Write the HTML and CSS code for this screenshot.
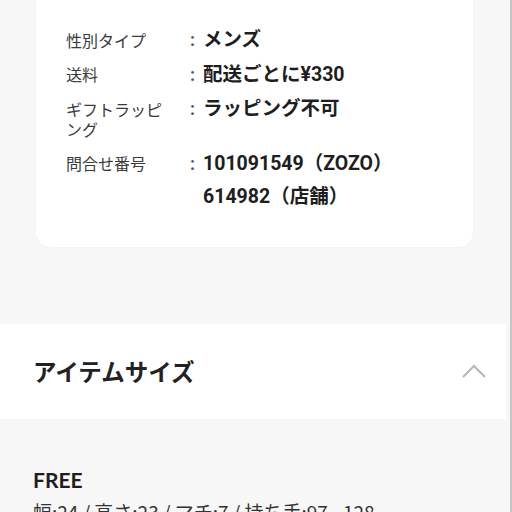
FILE: index.html
```html
<!DOCTYPE html>
<html lang="ja">
  <head>
    <meta charset="UTF-8" />
    <meta name="viewport" content="width=device-width, initial-scale=1.0" />
    <title>アイテム詳細</title>
    <link rel="stylesheet" href="styles.css">
  </head>
  <body>
    <div class="page">
      <div class="infoCard">
        <dl class="infoList">
          <dt>性別タイプ</dt>
          <dd><span class="colon">:</span><span class="value">メンズ</span></dd>

          <dt>送料</dt>
          <dd><span class="colon">:</span><span class="value">配送ごとに¥330</span></dd>

          <dt>ギフトラッピング</dt>
          <dd><span class="colon">:</span><span class="value">ラッピング不可</span></dd>

          <dt>問合せ番号</dt>
          <dd><span class="colon">:</span><span class="value">101091549（ZOZO）<br>614982（店舗）</span></dd>
        </dl>
      </div>

      <div class="sectionHead">
        <h2>アイテムサイズ</h2>
        <svg class="chevron" width="24" height="14" viewBox="0 0 24 14">
          <polyline points="1,13 12,2 23,13" fill="none" stroke="#b8b8b8" stroke-width="2.2" />
        </svg>
      </div>

      <div class="sizeBlock">
        <div class="sizeName">FREE</div>
        <div class="sizeDetail">幅:24 / 高さ:23 / マチ:7 / 持ち手:97 - 128</div>
      </div>
    </div>
  </body>
</html>
```

FILE: styles.css
```css
html {
  background: #f7f7f7;
}

body {
  margin: 0;
  border-right: 2px solid #c6c6c6;
  font-family: Roboto, "Noto Sans CJK JP", sans-serif;
  color: #222;
}

.page {
  margin-right: 4px;
}

/* info card, its top is scrolled away */
.infoCard {
  margin: -16px 33px 0 36px;
  padding: 39px 20px 34px 30px;
  background: #fff;
  border-radius: 14px;
  box-shadow: 0 0 2px rgba(0, 0, 0, 0.06);
}

.infoList {
  display: grid;
  grid-template-columns: 108px 1fr;
  column-gap: 16px;
  margin: 0;
}

.infoList dt {
  padding: 6.5px 0 8px;
  font-family: "Noto Sans CJK JP", sans-serif;
  font-size: 16px;
  line-height: 20px;
  color: #3a3a3a;
}

.infoList dd {
  display: flex;
  margin: 0;
}

.colon {
  width: 13px;
  flex: none;
  font-size: 18px;
  font-weight: bold;
  line-height: 33px;
  color: #555;
}

.value {
  font-size: 19.5px;
  font-weight: bold;
  line-height: 33px;
  color: #1e1e1e;
}

.sectionHead {
  display: flex;
  align-items: center;
  justify-content: space-between;
  height: 95px;
  margin-top: 77px;
  padding: 0 20px 0 33px;
  background: #fff;
}

.sectionHead h2 {
  margin: 0;
  font-family: "Noto Sans CJK JP", sans-serif;
  font-size: 23.5px;
  font-weight: bold;
  color: #222;
}

.chevron {
  display: block;
}

.sizeBlock {
  padding: 47px 33px 20px;
}

.sizeName {
  font-family: Lato, "Noto Sans CJK JP", sans-serif;
  font-size: 21px;
  font-weight: bold;
  line-height: 28px;
  color: #1e1e1e;
}

.sizeDetail {
  margin-top: 4px;
  font-family: "Noto Sans CJK JP", sans-serif;
  font-size: 19px;
  line-height: 28px;
  color: #333;
}
```
